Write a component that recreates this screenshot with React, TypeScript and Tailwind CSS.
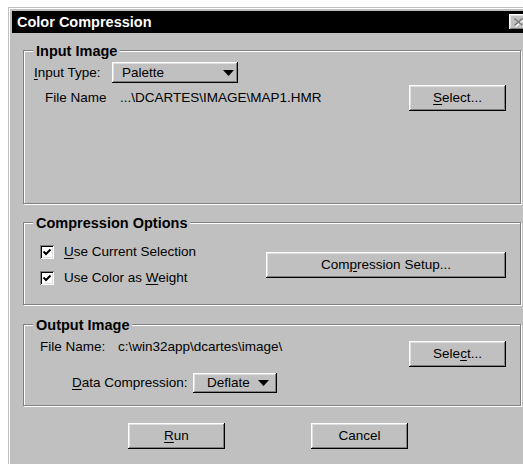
import React from 'react';

// raised 3D edge used for push buttons and the drop-down boxes
const RAISED = 'shadow-[inset_-1px_-1px_0_#000,inset_1px_1px_0_#fff,inset_-2px_-2px_0_#808080,inset_2px_2px_0_#dfdfdf]';
const SUNKEN = 'shadow-[inset_1px_1px_0_#808080,inset_-1px_-1px_0_#fff,inset_2px_2px_0_#000,inset_-2px_-2px_0_#dfdfdf]';

function Key({ children }: { children: React.ReactNode }) {
  return <span className="underline decoration-1 underline-offset-[2px]">{children}</span>;
}

function Btn({ className = '', children }: { className?: string; children: React.ReactNode }) {
  return (
    <button type="button" className={`${RAISED} flex h-[26px] shrink-0 items-center justify-center bg-[#c0c0c0] text-black ${className}`}>
      {children}
    </button>
  );
}

function Dropdown({ value, className = '' }: { value: string; className?: string }) {
  return (
    <div className={`${RAISED} flex items-center bg-[#c0c0c0] ${className}`}>
      <span className="flex-1">{value}</span>
      <svg width="11" height="6" viewBox="0 0 11 6"><polygon points="0,0 11,0 5.5,6" fill="#000" /></svg>
    </div>
  );
}

function Check({ label }: { label: React.ReactNode }) {
  return (
    <div className="flex h-[26px] items-center">
      <span className={`${SUNKEN} flex h-[14px] w-[14px] items-center justify-center bg-white`}>
        <svg width="14" height="14" viewBox="0 0 14 14"><path d="M3.5 6.5 L6 9 L10.5 4.5" stroke="#000" strokeWidth="2" fill="none" /></svg>
      </span>
      <span className="ml-[10px]">{label}</span>
    </div>
  );
}

function Group({ title, className = '', children }: { title: string; className?: string; children: React.ReactNode }) {
  return (
    <div className={`relative w-[498px] border border-[#808080] shadow-[inset_1px_1px_0_#fff,1px_1px_0_#fff] ${className}`}>
      <span className="absolute -top-[8px] left-[9px] bg-[#c0c0c0] px-[3px] text-[14.5px] font-bold leading-[16px]">{title}</span>
      {children}
    </div>
  );
}

export default function App() {
  return (
    <div className="h-[464px] w-[523px] overflow-hidden bg-white font-['Liberation_Sans',Arial,sans-serif] text-[13.5px] leading-[16px] text-black">
      <div className="ml-[8px] mt-[7px] w-[530px] border border-[#c0c0c0] bg-[#c0c0c0] p-[2px] pl-[2px] shadow-[inset_1px_1px_0_#fff]">
        <div className="pl-px pt-[1px]">
          <div className="flex h-[22px] items-center bg-black pl-[5px]">
            <span className="text-[14.5px] font-bold text-white">Color Compression</span>
            <span className={`${RAISED} relative ml-auto mr-[7px] flex h-[16px] w-[19px] items-center justify-center bg-[#c0c0c0]`}>
              <svg width="10" height="9" viewBox="0 0 10 9">
                <path d="M1.5 1.5 L9.5 8.5 M9.5 1.5 L1.5 8.5" stroke="#fff" strokeWidth="1.6" />
                <path d="M0.5 0.5 L8.5 7.5 M8.5 0.5 L0.5 7.5" stroke="#808080" strokeWidth="1.6" />
              </svg>
            </span>
          </div>

          <div className="px-[11px] pt-[17px] pb-[20px]">
            <Group title="Input Image" className="h-[154px] pl-[10px] pr-[14px] pt-[11px]">
              <div className="flex h-[21px] items-center">
                <span className="w-[78px]"><Key>I</Key>nput Type:</span>
                <Dropdown value="Palette" className="h-[21px] w-[126px] pl-[10px] pr-[4px]" />
              </div>
              <div className="mt-[2px] flex h-[26px] items-center">
                <span className="w-[86px] pl-[11px]">File Name</span>
                <span className="flex-1">...\DCARTES\IMAGE\MAP1.HMR</span>
                <Btn className="w-[97px]"><span><Key>S</Key>elect...</span></Btn>
              </div>
            </Group>

            <Group title="Compression Options" className="mt-[18px] flex h-[83px] items-center pl-[16px] pr-[14px] pt-[3px]">
              <div>
                <Check label={<><Key>U</Key>se Current Selection</>} />
                <Check label={<>Use Color as <Key>W</Key>eight</>} />
              </div>
              <Btn className="ml-auto w-[240px]"><span>Com<Key>p</Key>ression Setup...</span></Btn>
            </Group>

            <Group title="Output Image" className="mt-[19px] h-[82px] pl-[16px] pr-[14px] pt-[14px]">
              <div className="flex items-start">
                <span className="h-[16px] w-[78px]">File Name:</span>
                <span className="h-[16px] flex-1">c:\win32app\dcartes\image\</span>
                <Btn className="mt-[2px] w-[97px]"><span>Sele<Key>c</Key>t...</span></Btn>
              </div>
              <div className="mt-[6px] flex h-[20px] items-center">
                <span className="ml-[32px] w-[121px]"><Key>D</Key>ata Compression:</span>
                <Dropdown value="Deflate" className="h-[20px] w-[84px] pl-[14px] pr-[8px]" />
              </div>
            </Group>

            <div className="mt-[17px] flex">
              <Btn className="ml-[105px] w-[97px]"><span><Key>R</Key>un</span></Btn>
              <Btn className="ml-[86px] w-[97px]">Cancel</Btn>
            </div>
          </div>
        </div>
      </div>
    </div>
  );
}
